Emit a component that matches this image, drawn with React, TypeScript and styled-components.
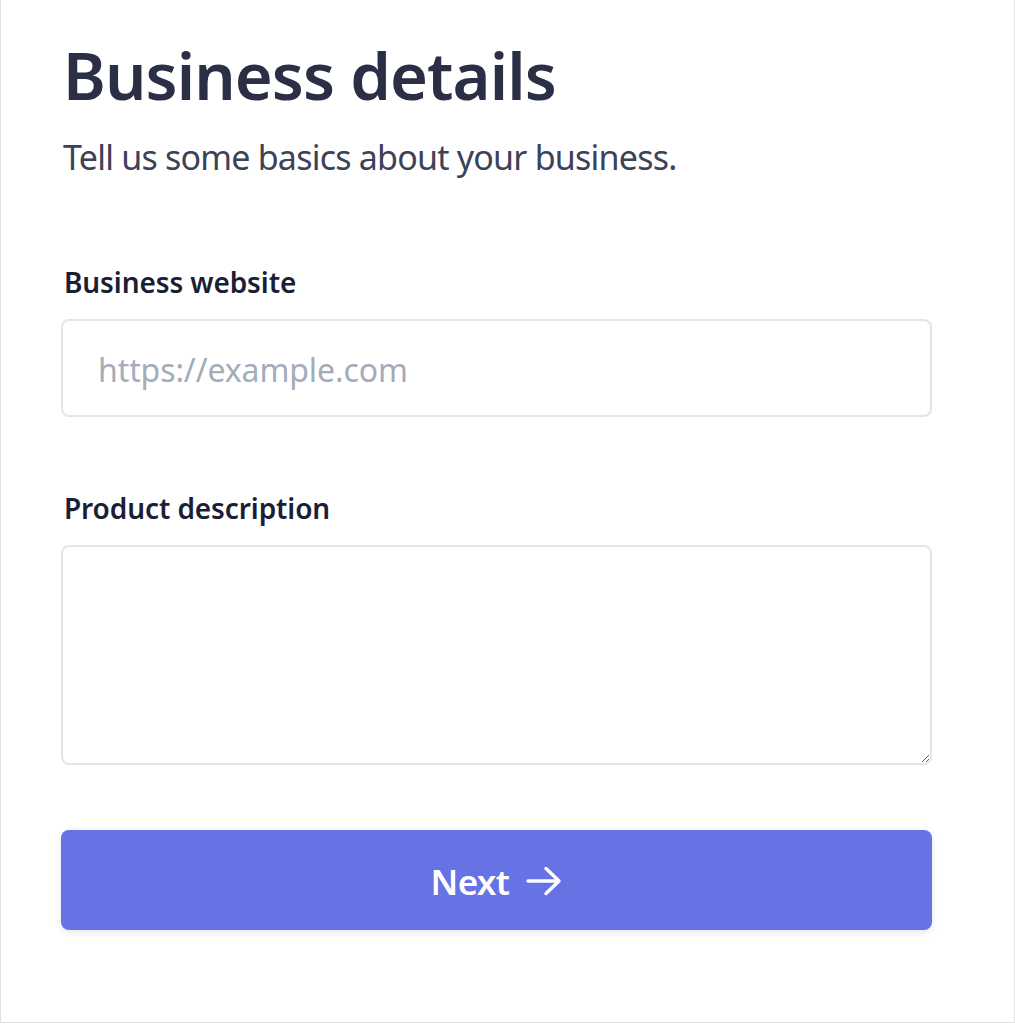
import React from "react";
import styled, { createGlobalStyle } from "styled-components";

const Global = createGlobalStyle`
  html, body { margin: 0; padding: 0; background: #ffffff; }
  * { box-sizing: border-box; }
  body { font-family: "Noto Sans", "Open Sans", sans-serif; -webkit-font-smoothing: antialiased; }
`;

const Card = styled.div`
  width: 100%;
  height: 1023px;
  border: 1px solid #e3e3e3;
  border-top: none;
  background: #ffffff;
  padding: 33px 82px 0 60px;
  display: flex;
  flex-direction: column;
`;

const Heading = styled.h1`
  margin: 0;
  font-size: 65px;
  line-height: 84px;
  font-weight: 600;
  color: #2a2f45;
  letter-spacing: -0.9px;
  padding-left: 2px;
`;

const Subtitle = styled.p`
  margin: 19px 0 0;
  font-size: 34px;
  line-height: 42px;
  font-weight: 400;
  color: #3c4257;
  letter-spacing: -0.78px;
  padding-left: 2px;
`;

const Form = styled.form`
  display: flex;
  flex-direction: column;
  margin-top: 87px;
`;

const Field = styled.div<{ $gap?: number }>`
  display: flex;
  flex-direction: column;
  gap: 20px;
  margin-bottom: ${(p) => p.$gap ?? 0}px;
`;

const Label = styled.label`
  font-size: 28px;
  line-height: 34px;
  font-weight: 600;
  color: #1a1f36;
  padding-left: 3px;
  letter-spacing: -0.1px;
`;

const TextInput = styled.input`
  width: 100%;
  height: 98px;
  border: 2px solid #e3e5e8;
  border-radius: 8px;
  padding: 2px 35px 0;
  font-family: inherit;
  font-size: 32px;
  color: #1a1f36;
  background: #fff;
  outline: none;
  letter-spacing: -0.1px;
  &::placeholder { color: #a3acb9; }
`;

const TextArea = styled.textarea`
  width: 100%;
  height: 220px;
  border: 2px solid #e3e5e8;
  border-radius: 8px;
  padding: 20px 35px;
  font-family: inherit;
  font-size: 32px;
  color: #1a1f36;
  background: #fff;
  outline: none;
  display: block;
`;

const Button = styled.button`
  margin-top: 65px;
  width: 100%;
  height: 100px;
  border: none;
  border-radius: 8px;
  background: #6772e5;
  color: #ffffff;
  font-family: inherit;
  font-size: 35px;
  font-weight: 600;
  display: flex;
  align-items: center;
  justify-content: center;
  gap: 17px;
  padding-top: 3px;
  box-shadow: 0 2px 6px rgba(50, 50, 93, 0.12);
  cursor: pointer;
  letter-spacing: -0.6px;
`;

const Arrow = () => (
  <svg width="36" height="32" viewBox="0 0 36 32" fill="none">
    <path d="M2 16H33M20 3.5L33 16L20 28.5" stroke="#fff" strokeWidth="3.4" strokeLinecap="round" strokeLinejoin="round" />
  </svg>
);

export default function App() {
  return (
    <>
      <Global />
      <Card>
        <Heading>Business details</Heading>
        <Subtitle>Tell us some basics about your business.</Subtitle>
        <Form onSubmit={(e) => e.preventDefault()}>
          <Field $gap={74}>
            <Label>Business website</Label>
            <TextInput placeholder="https://example.com" />
          </Field>
          <Field>
            <Label>Product description</Label>
            <TextArea />
          </Field>
          <Button type="submit">
            Next <Arrow />
          </Button>
        </Form>
      </Card>
    </>
  );
}
